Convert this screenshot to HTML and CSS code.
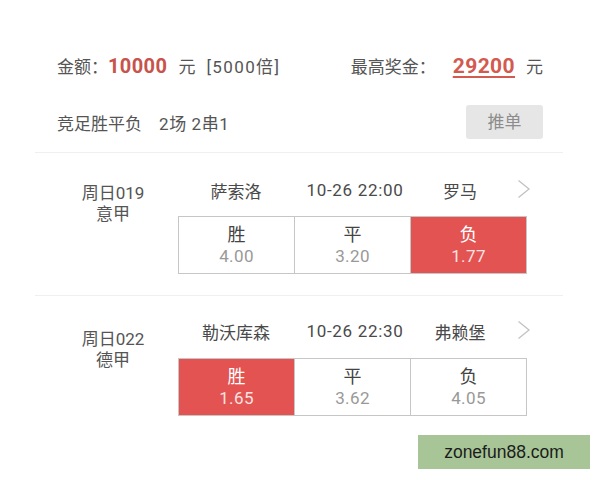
FILE: index.html
```html
<!DOCTYPE html>
<html lang="zh">
<head>
<meta charset="utf-8">
<link rel="stylesheet" href="styles.css">
</head>
<body>
<div class="page">
  <div class="summary">
    <div class="amount">金额：<span class="num">10000</span><span class="unit">元</span><span class="mult">[5000倍]</span></div>
    <div class="prize">最高奖金：<span class="num big under">29200</span><span class="unit">元</span></div>
  </div>
  <div class="info">
    <div class="play">竞足胜平负<span class="gap">2场 2串1</span></div>
    <div class="btn">推单</div>
  </div>
  <div class="divider"></div>

  <div class="match">
    <div class="league">
      <div>周日019</div>
      <div>意甲</div>
    </div>
    <div class="detail">
      <div class="teams">
        <div class="team">萨索洛</div>
        <div class="team time">10-26 22:00</div>
        <div class="team">罗马</div>
        <svg class="chev" width="14" height="20" viewBox="0 0 14 20"><polyline points="1.5,1.5 12,10 1.5,18.5" fill="none" stroke="#c2c2c2" stroke-width="1.3"/></svg>
      </div>
      <div class="odds">
        <div class="cell"><div class="lab">胜</div><div class="val">4.00</div></div>
        <div class="cell"><div class="lab">平</div><div class="val">3.20</div></div>
        <div class="cell on"><div class="lab">负</div><div class="val">1.77</div></div>
      </div>
    </div>
  </div>
  <div class="divider"></div>

  <div class="match second">
    <div class="league">
      <div>周日022</div>
      <div>德甲</div>
    </div>
    <div class="detail">
      <div class="teams">
        <div class="team">勒沃库森</div>
        <div class="team time">10-26 22:30</div>
        <div class="team">弗赖堡</div>
        <svg class="chev" width="14" height="20" viewBox="0 0 14 20"><polyline points="1.5,1.5 12,10 1.5,18.5" fill="none" stroke="#c2c2c2" stroke-width="1.3"/></svg>
      </div>
      <div class="odds">
        <div class="cell on"><div class="lab">胜</div><div class="val">1.65</div></div>
        <div class="cell"><div class="lab">平</div><div class="val">3.62</div></div>
        <div class="cell"><div class="lab">负</div><div class="val">4.05</div></div>
      </div>
    </div>
  </div>
</div>
<div class="watermark">zonefun88.com</div>
</body>
</html>
```
FILE: styles.css
```css
html, body {
  margin: 0;
  padding: 0;
  background: #ffffff;
}
body {
  width: 600px;
  height: 480px;
  position: relative;
  overflow: hidden;
  font-family: Roboto, "Noto Sans CJK SC", sans-serif;
  color: #555555;
}
.page {
  padding: 51px 37px 0 35px;
}
.summary {
  display: flex;
  justify-content: space-between;
  align-items: center;
  height: 28px;
  padding: 0 20px 0 22px;
  font-size: 17px;
}
.num {
  font-size: 20px;
  font-weight: bold;
  color: #c8534b;
  letter-spacing: 0.4px;
}
.num.big {
  font-size: 21px;
  margin-left: 17px;
}
.unit {
  margin-left: 11px;
}
.mult {
  margin-left: 11px;
  letter-spacing: 1.4px;
}
.under {
  color: #d25a4f;
  text-decoration: underline;
  text-underline-offset: 3px;
  text-decoration-thickness: 2px;
}
.info {
  display: flex;
  justify-content: space-between;
  align-items: center;
  margin-top: 26px;
  height: 34px;
  padding: 0 20px 0 22px;
  font-size: 17px;
}
.gap {
  margin-left: 17px;
  letter-spacing: 0.6px;
}
.btn {
  width: 77px;
  height: 34px;
  line-height: 34px;
  text-align: center;
  background: #e6e6e6;
  color: #8c8c8c;
  border-radius: 3px;
}
.divider {
  height: 1px;
  background: #efefef;
  margin-top: 13px;
}
.match + .divider {
  margin-top: 0;
}
.match {
  display: flex;
  padding: 25px 0 21px 0;
}
.match.second {
  padding-top: 23px;
}
.match.second .odds {
  margin-top: 15px;
}
.match.second .league {
  padding-top: 10px;
}
.league {
  width: 130px;
  margin-left: 13px;
  padding-top: 5px;
  text-align: center;
  font-size: 17px;
  line-height: 21px;
  color: #555555;
}
.detail {
  width: 349px;
}
.teams {
  position: relative;
  display: flex;
  height: 24px;
  align-items: center;
  font-size: 17px;
  color: #4a4a4a;
}
.team {
  width: 116px;
  text-align: center;
}
.team.time {
  margin-left: 3px;
  margin-right: -3px;
  letter-spacing: 0.7px;
}
.team:nth-child(3) {
  margin-left: -8px;
  margin-right: 8px;
}
.chev {
  position: absolute;
  right: -4px;
  top: 1px;
}
.odds {
  display: flex;
  margin-top: 14px;
  height: 56px;
  border: 1px solid #c6c6c6;
}
.cell {
  flex: 1;
  display: flex;
  flex-direction: column;
  align-items: center;
  justify-content: center;
  border-left: 1px solid #c6c6c6;
}
.cell:first-child {
  border-left: none;
}
.lab {
  font-size: 18px;
  line-height: 23px;
  color: #444444;
}
.val {
  font-size: 17px;
  line-height: 21px;
  color: #999999;
  letter-spacing: 0.4px;
}
.cell.on {
  background: #e25352;
}
.cell.on .lab {
  color: #ffffff;
}
.cell.on .val {
  color: #fbe3e3;
}
.watermark {
  position: absolute;
  left: 418px;
  top: 435px;
  width: 172px;
  height: 34px;
  line-height: 34px;
  text-align: center;
  background: #a7c596;
  color: #1c1c1c;
  font-family: "Liberation Sans", Arial, sans-serif;
  font-size: 17.5px;
}
```
